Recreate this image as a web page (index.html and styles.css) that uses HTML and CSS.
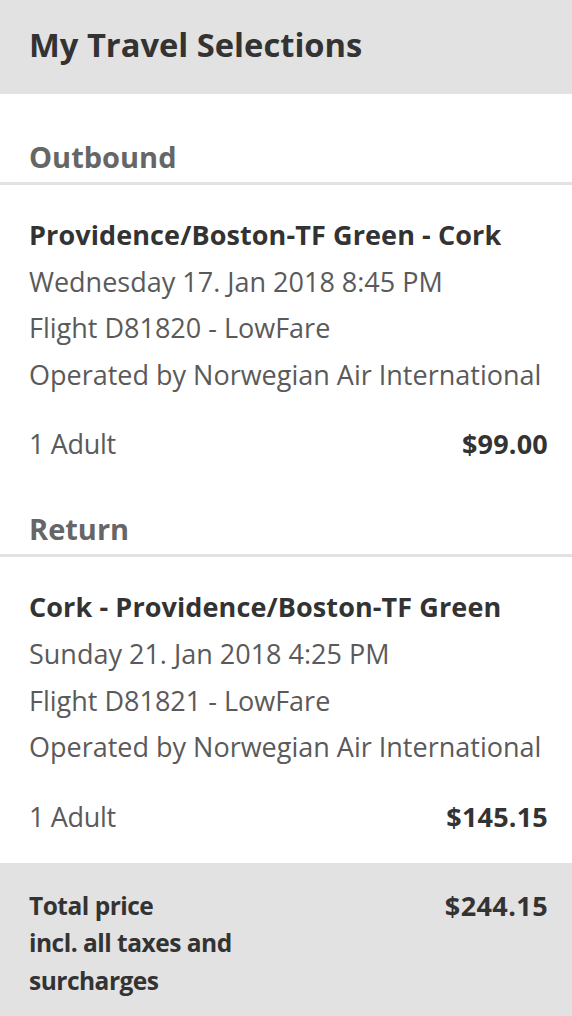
FILE: index.html
```html
<!DOCTYPE html>
<html>
<head>
<meta charset="utf-8">
<link rel="stylesheet" href="styles.css">
</head>
<body>
<div class="panel">
  <header class="panel-header">
    <h1 class="panel-title">My Travel Selections</h1>
  </header>

  <section class="leg leg-first">
    <h2 class="leg-heading">Outbound</h2>
    <div class="leg-body">
      <div class="route">Providence/Boston-TF Green - Cork</div>
      <div class="detail">Wednesday 17. Jan 2018 8:45 PM</div>
      <div class="detail">Flight D81820 - LowFare</div>
      <div class="detail">Operated by Norwegian Air International</div>
      <div class="price-row">
        <span class="pax">1 Adult</span>
        <span class="price">$99.00</span>
      </div>
    </div>
  </section>

  <section class="leg">
    <h2 class="leg-heading">Return</h2>
    <div class="leg-body">
      <div class="route">Cork - Providence/Boston-TF Green</div>
      <div class="detail">Sunday 21. Jan 2018 4:25 PM</div>
      <div class="detail">Flight D81821 - LowFare</div>
      <div class="detail">Operated by Norwegian Air International</div>
      <div class="price-row">
        <span class="pax">1 Adult</span>
        <span class="price">$145.15</span>
      </div>
    </div>
  </section>

  <footer class="total">
    <div class="total-label">Total price<br>incl. all taxes and<br>surcharges</div>
    <div class="total-price">$244.15</div>
  </footer>
</div>
</body>
</html>
```

FILE: styles.css
```css
html, body {
  margin: 0;
  padding: 0;
  background: #ffffff;
}
body {
  font-family: "Open Sans", "Lato", sans-serif;
  color: #5a5a5a;
  width: 572px;
  min-height: 1016px;
}
.panel {
  display: flex;
  flex-direction: column;
  min-height: 1016px;
}
.panel-header {
  background: #e2e2e2;
  height: 94px;
  display: flex;
  align-items: center;
  padding: 0 29px;
  box-sizing: border-box;
}
.panel-title {
  margin: 0;
  margin-top: -6px;
  font-size: 32.7px;
  font-weight: 700;
  color: #333333;
}
.leg {
  padding-top: 41.7px;
}
.leg-first {
  padding-top: 43px;
}
.leg-heading {
  margin: 0;
  padding: 0 29px 5px;
  line-height: 40px;
  font-size: 29px;
  font-weight: 700;
  color: #666666;
  border-bottom: 3px solid #e2e2e2;
}
.leg-body {
  padding: 27px 24px 0 29px;
  font-size: 27px;
  line-height: 46.67px;
}
.route {
  font-weight: 700;
  color: #333333;
  letter-spacing: 0.1px;
}
.detail {
  color: #5a5a5a;
}
.price-row {
  margin-top: 22.4px;
  display: flex;
  justify-content: space-between;
}
.pax {
  letter-spacing: -0.3px;
}
.price {
  font-weight: 700;
  color: #333333;
  letter-spacing: 0.2px;
}
.total {
  margin-top: 22.7px;
  flex: 1;
  background: #e2e2e2;
  padding: 24px 24px 0 29px;
  display: flex;
  justify-content: space-between;
  align-items: flex-start;
  line-height: 37.5px;
  font-weight: 700;
  color: #333333;
}
.total-label {
  font-size: 24.5px;
  letter-spacing: -0.5px;
}
.total-price {
  font-size: 27px;
  letter-spacing: 0.4px;
}
```
